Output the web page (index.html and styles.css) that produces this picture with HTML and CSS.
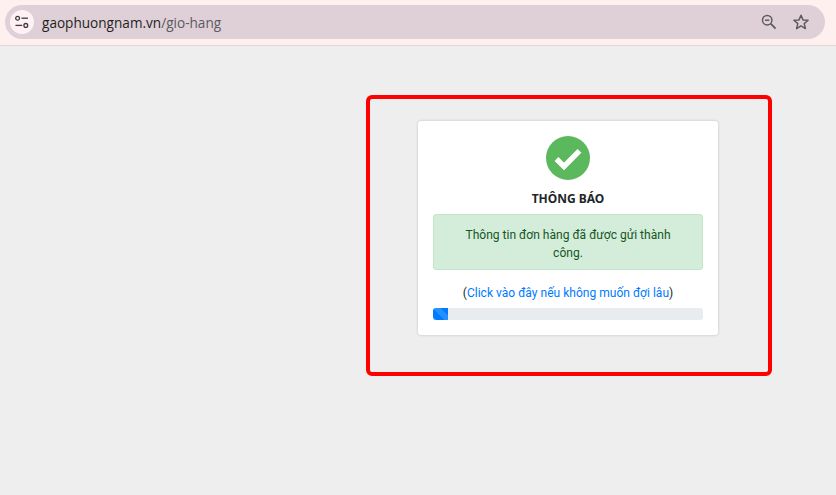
FILE: index.html
```html
<!DOCTYPE html>
<html lang="vi">
<head>
<meta charset="utf-8">
<title>Thông báo</title>
<link rel="stylesheet" href="styles.css">
</head>
<body>
<header class="toolbar">
  <div class="omnibox">
    <span class="site-btn">
      <svg width="16" height="16" viewBox="0 0 16 16" fill="none" stroke="#3c3c44" stroke-width="1.3">
        <circle cx="3.6" cy="4.2" r="1.9"/>
        <path d="M7.5 4.2H14"/>
        <circle cx="11.8" cy="11.4" r="1.9"/>
        <path d="M1.5 11.4H8.2"/>
      </svg>
    </span>
    <span class="url">gaophuongnam.vn<span class="url-path">/gio-hang</span></span>
    <span class="actions">
      <svg width="18" height="18" viewBox="0 0 18 18" fill="none" stroke="#5f5a60" stroke-width="1.5">
        <circle cx="7.2" cy="7.2" r="4.7"/>
        <path d="M5 7.2H9.4"/>
        <path d="M10.7 10.7L15.6 15.6" stroke-width="1.8"/>
      </svg>
      <svg width="18" height="18" viewBox="0 0 18 18" fill="none" stroke="#5f5a60" stroke-width="1.5" stroke-linejoin="round">
        <path d="M9 2.2L11 6.9L16.1 7.3L12.2 10.6L13.4 15.6L9 12.9L4.6 15.6L5.8 10.6L1.9 7.3L7 6.9Z"/>
      </svg>
    </span>
  </div>
</header>
<main class="page">
  <div class="highlight"></div>
  <section class="card">
    <svg class="check" width="44" height="44" viewBox="0 0 44 44">
      <circle cx="22" cy="22" r="22" fill="#5cb85c"/>
      <path d="M10.5 23L18 30.5L33.5 14.8" fill="none" stroke="#fff" stroke-width="5.4"/>
    </svg>
    <h1 class="title">THÔNG BÁO</h1>
    <div class="alert">Thông tin đơn hàng đã được gửi thành công.</div>
    <p class="link-line">(<a href="#">Click vào đây nếu không muốn đợi lâu</a>)</p>
    <div class="progress"><div class="progress-bar"></div></div>
  </section>
</main>
</body>
</html>
```
FILE: styles.css
```css
* { box-sizing: border-box; }
html, body { height: 100%; }
body {
  margin: 0;
  display: flex;
  flex-direction: column;
  background: #eeeeee;
  font-family: "Noto Sans", "Open Sans", sans-serif;
  overflow: hidden;
}
.toolbar {
  height: 46px;
  flex: none;
  padding: 5px 11px 6px 5px;
  background: #fff0f0;
  border-bottom: 1px solid #e2d6d8;
}
.omnibox {
  height: 34px;
  display: flex;
  align-items: center;
  padding: 0 5px;
  border-radius: 17px;
  background: #dfd0d7;
}
.site-btn {
  width: 24px;
  height: 24px;
  flex: none;
  display: flex;
  align-items: center;
  justify-content: center;
  border-radius: 50%;
  background: #fff0f3;
}
.url {
  margin-left: 8px;
  font-family: "Open Sans", "Noto Sans", sans-serif;
  font-size: 13.6px;
  color: #1f1f24;
}
.url-path { color: #5c5a62; }
.actions {
  margin-left: auto;
  display: flex;
  align-items: center;
  gap: 14px;
  padding-right: 10px;
}
.page {
  flex: 1;
  position: relative;
  display: flex;
  justify-content: flex-start;
  align-items: flex-start;
  padding: 75px 0 0 418px;
}
.highlight {
  position: absolute;
  left: 366px;
  top: 49px;
  width: 406px;
  height: 281px;
  border: 4px solid #ff0000;
  border-radius: 6px;
}
.card {
  width: 300px;
  height: 214px;
  padding: 15px;
  display: flex;
  flex-direction: column;
  align-items: stretch;
  background: #fff;
  border-radius: 3px;
  box-shadow: 0 0 3px rgba(0, 0, 0, 0.2);
}
.check { align-self: center; flex: none; }
.title {
  margin: 11px 0 0;
  font-size: 12px;
  line-height: 16px;
  font-weight: 700;
  text-align: center;
  color: #212529;
}
.alert {
  margin-top: 7px;
  height: 56px;
  padding: 11px 25px 0;
  font-family: Roboto, "Noto Sans", sans-serif;
  font-size: 12.05px;
  line-height: 18px;
  text-align: center;
  color: #155724;
  background: #d4edda;
  border: 1px solid #c3e6cb;
  border-radius: 3px;
}
.link-line {
  margin: 14px 0 0;
  font-family: Roboto, "Noto Sans", sans-serif;
  font-size: 12.05px;
  line-height: 18px;
  text-align: center;
  color: #212529;
}
.link-line a { color: #007bff; text-decoration: none; }
.progress {
  margin-top: 6px;
  height: 12px;
  background: #e9ecef;
  border-radius: 3px;
  overflow: hidden;
}
.progress-bar {
  width: 15px;
  height: 100%;
  background-color: #007bff;
  background-image: linear-gradient(45deg, rgba(255,255,255,.15) 25%, transparent 25%, transparent 50%, rgba(255,255,255,.15) 50%, rgba(255,255,255,.15) 75%, transparent 75%, transparent);
  background-size: 16px 16px;
}
```
